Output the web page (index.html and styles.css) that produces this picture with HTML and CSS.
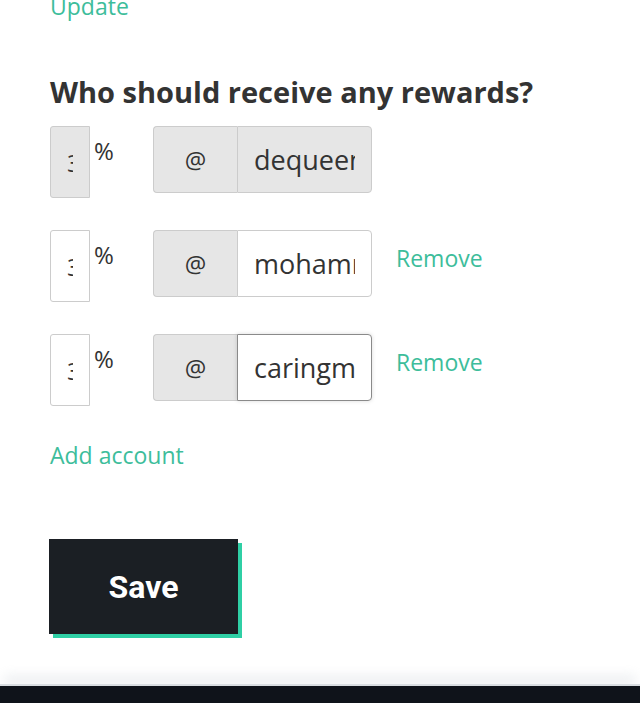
FILE: index.html
```html
<!DOCTYPE html>
<html lang="en">
<head>
<meta charset="utf-8">
<title>Beneficiaries</title>
<link rel="stylesheet" href="styles.css">
</head>
<body>
<main class="page">
  <a class="link update" href="#">Update</a>
  <h3 class="title">Who should receive any rewards?</h3>
  <div class="rows">
    <div class="row">
      <input class="pct" type="text" value="3" disabled>
      <span class="pct-sign">%</span>
      <div class="group">
        <span class="prefix">@</span>
        <input class="name disabled" type="text" value="dequeen" disabled>
      </div>
    </div>
    <div class="row">
      <input class="pct" type="text" value="3">
      <span class="pct-sign">%</span>
      <div class="group">
        <span class="prefix">@</span>
        <input class="name" type="text" value="mohammed">
      </div>
      <a class="link remove" href="#">Remove</a>
    </div>
    <div class="row">
      <input class="pct" type="text" value="3">
      <span class="pct-sign">%</span>
      <div class="group">
        <span class="prefix">@</span>
        <input class="name focus" type="text" value="caringmom">
      </div>
      <a class="link remove" href="#">Remove</a>
    </div>
  </div>
  <a class="link add" href="#">Add account</a>
  <div class="actions">
    <button class="save" type="button">Save</button>
  </div>
</main>
<footer class="footer"></footer>
</body>
</html>
```
FILE: styles.css
```css
html, body {
  margin: 0;
  padding: 0;
  background: #ffffff;
  height: 703px;
  overflow: hidden;
}
body {
  font-family: "Open Sans", "Noto Sans", sans-serif;
  color: #333333;
  display: flex;
  flex-direction: column;
}
.page {
  padding: 0 0 0 50px;
  flex: 1;
  display: flex;
  flex-direction: column;
  align-items: flex-start;
}
.link {
  color: #3dbd9b;
  text-decoration: none;
  font-size: 23px;
  line-height: 30px;
}
.update {
  margin-top: -9px;
}
.title {
  margin: 51px 0 0 0;
  font-size: 29px;
  line-height: 40px;
  font-weight: 700;
  color: #333333;
}
.rows {
  margin-top: 14px;
  display: flex;
  flex-direction: column;
  gap: 32px;
}
.row {
  display: flex;
  align-items: flex-start;
  height: 72px;
}
.pct {
  box-sizing: border-box;
  width: 40px;
  height: 72px;
  margin: 0;
  padding: 0 16px;
  border: 1px solid #cccccc;
  border-radius: 3px 0 0 3px;
  background: #ffffff;
  font-family: inherit;
  font-size: 24px;
  color: #333333;
  outline: none;
}
.pct:disabled {
  background: #e6e6e6;
}
.pct-sign {
  box-sizing: border-box;
  width: 63px;
  padding-left: 4px;
  font-size: 24px;
  line-height: 30px;
  margin-top: 10px;
  color: #333333;
}
.group {
  display: flex;
  align-items: stretch;
  height: 67px;
}
.prefix {
  box-sizing: border-box;
  width: 84px;
  display: flex;
  align-items: center;
  justify-content: center;
  background: #e6e6e6;
  border: 1px solid #cccccc;
  border-right: none;
  border-radius: 4px 0 0 4px;
  font-size: 24px;
  color: #333333;
}
.name {
  box-sizing: border-box;
  width: 135px;
  height: 67px;
  margin: 0;
  padding: 0 16px;
  border: 1px solid #cccccc;
  border-radius: 0 4px 4px 0;
  background: #ffffff;
  font-family: inherit;
  font-size: 27px;
  color: #333333;
  outline: none;
}
.name.disabled {
  background: #e6e6e6;
}
.name.focus {
  border-color: #8a8a8a;
  box-shadow: 0 0 4px rgba(0, 0, 0, 0.15);
}
.remove {
  align-self: flex-start;
  margin: 13px 0 0 24px;
}
.add {
  margin-top: 34px;
}
.actions {
  margin-top: 69px;
}
.save {
  width: 189px;
  height: 95px;
  margin: 0 0 0 -1px;
  padding: 0;
  border: none;
  background: #1b1f24;
  box-shadow: 4px 4px 0 #2fcfa5;
  color: #ffffff;
  font-family: Roboto, "Liberation Sans", sans-serif;
  font-weight: 700;
  font-size: 32px;
  cursor: pointer;
}
.footer {
  height: 17px;
  background: #0f131a;
  box-shadow: 0 -2px 0 #d9dde1, 0 -14px 12px -4px rgba(220, 224, 228, 0.6);
}
```
